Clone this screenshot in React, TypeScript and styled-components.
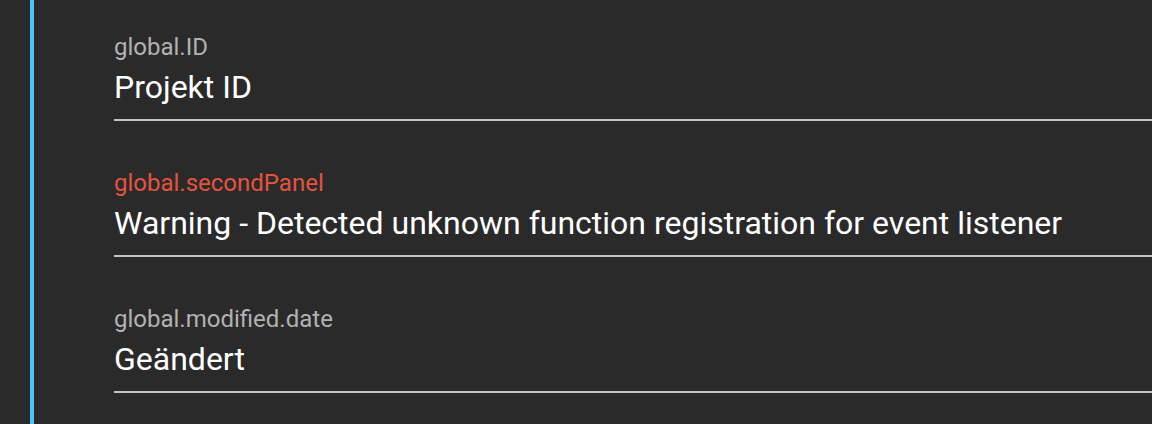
import React from "react";
import styled, { createGlobalStyle } from "styled-components";

const GlobalStyle = createGlobalStyle`
  html, body {
    margin: 0;
    padding: 0;
    background: #2a2a2a;
  }
  body {
    font-family: Roboto, "Liberation Sans", Arial, sans-serif;
    -webkit-font-smoothing: antialiased;
  }
`;

const Panel = styled.div`
  box-sizing: border-box;
  min-height: 100vh;
  margin-left: 30px;
  border-left: 4px solid #4fc3f7;
  padding: 33px 0 0 80px;
  display: flex;
  flex-direction: column;
  gap: 48px;
`;

const Field = styled.div`
  display: flex;
  flex-direction: column;
  padding-bottom: 6px;
  border-bottom: 2px solid #c4c4c4;
`;

const Label = styled.label<{ $error?: boolean }>`
  font-size: 24px;
  line-height: 28px;
  color: ${(p) => (p.$error ? "#e4533f" : "#b2b2b2")};
  white-space: nowrap;
`;

const Value = styled.div`
  font-size: 32px;
  line-height: 52px;
  color: #ffffff;
  white-space: nowrap;
`;

const fields = [
  { label: "global.ID", value: "Projekt ID", error: false },
  {
    label: "global.secondPanel",
    value: "Warning - Detected unknown function registration for event listener",
    error: true,
  },
  { label: "global.modified.date", value: "Geändert", error: false },
];

export default function App() {
  return (
    <>
      <GlobalStyle />
      <Panel>
        {fields.map((f) => (
          <Field key={f.label}>
            <Label $error={f.error}>{f.label}</Label>
            <Value>{f.value}</Value>
          </Field>
        ))}
      </Panel>
    </>
  );
}
